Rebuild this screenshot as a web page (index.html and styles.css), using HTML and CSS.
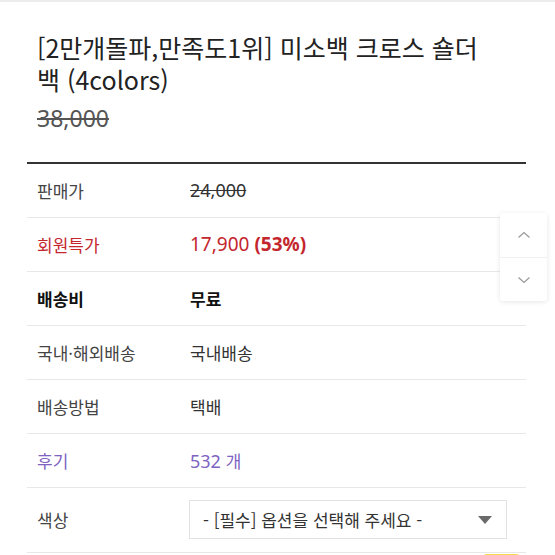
FILE: index.html
```html
<!DOCTYPE html>
<html lang="ko">
  <head>
    <meta charset="UTF-8" />
    <meta name="viewport" content="width=device-width, initial-scale=1.0" />
    <title>미소백 크로스 숄더 백</title>
    <link rel="stylesheet" href="styles.css">
  </head>
  <body>
    <main class="product">
      <h1 class="product--title">[2만개돌파,만족도1위] 미소백 크로스 숄더 백 (4colors)</h1>
      <p class="product--price">38,000</p>

      <table class="info">
        <tr>
          <td class="label">판매가</td>
          <td class="value num strike">24,000</td>
        </tr>
        <tr class="member">
          <td class="label">회원특가</td>
          <td class="value num">17,900 <span class="rate">(53%)</span></td>
        </tr>
        <tr class="strong">
          <td class="label">배송비</td>
          <td class="value">무료</td>
        </tr>
        <tr>
          <td class="label">국내·해외배송</td>
          <td class="value">국내배송</td>
        </tr>
        <tr>
          <td class="label">배송방법</td>
          <td class="value">택배</td>
        </tr>
        <tr class="review">
          <td class="label">후기</td>
          <td class="value"><span class="count">532</span> 개</td>
        </tr>
        <tr class="option">
          <td class="label">색상</td>
          <td class="value">
            <div class="select">
              <span>- [필수] 옵션을 선택해 주세요 -</span>
              <span class="select--arrow"></span>
            </div>
          </td>
        </tr>
      </table>

      <div class="more">
        <span class="more--badge"></span>
      </div>
    </main>

    <div class="scroll">
      <button class="scroll--button" aria-label="위로">
        <svg width="14" height="8" viewBox="0 0 14 8"><polyline points="1.5,6.5 7,1.5 12.5,6.5" fill="none" stroke="#999" stroke-width="1.2" /></svg>
      </button>
      <button class="scroll--button" aria-label="아래로">
        <svg width="14" height="8" viewBox="0 0 14 8"><polyline points="1.5,1.5 7,6.5 12.5,1.5" fill="none" stroke="#999" stroke-width="1.2" /></svg>
      </button>
    </div>
  </body>
</html>
```

FILE: styles.css
```css
* {
  box-sizing: border-box;
}

html,
body {
  margin: 0;
  background-color: #fff;
  font-family: "Noto Sans CJK KR", "Noto Sans", sans-serif;
  color: #222;
}

body {
  border-top: 2px solid #ececec;
  height: 555px;
  overflow: hidden;
}

.product {
  padding: 29px 29px 0 27px;
}

.product--title {
  max-width: 470px;
  margin: 0;
  padding-left: 10px;
  font-size: 25px;
  font-weight: 400;
  line-height: 32px;
  color: #222;
}

.product--price {
  margin: 8px 0 0;
  padding-left: 10px;
  font-family: "Noto Sans", sans-serif;
  font-size: 23px;
  line-height: 30px;
  color: #555;
  text-decoration: line-through;
}

.info {
  width: 100%;
  margin-top: 29px;
  border-collapse: collapse;
  border-top: 2px solid #333;
}

.info td {
  height: 54px;
  padding: 0;
  border-bottom: 1px solid #e8e8e8;
  font-size: 17px;
  vertical-align: middle;
}

.info .label {
  width: 151px;
  padding-left: 10px;
  color: #444;
}

.info .value {
  padding-left: 12px;
  color: #333;
}

.info .num,
.count {
  font-family: "Noto Sans", "Noto Sans CJK KR", sans-serif;
  font-size: 18px;
}

.strike {
  text-decoration: line-through;
}

.member .label,
.member .value {
  color: #c4262e;
}

.member .num {
  font-size: 19px;
}

.rate {
  font-size: 19px;
  font-weight: 700;
}

.strong .label,
.strong .value {
  font-weight: 700;
  color: #111;
}

.review .label,
.review .value {
  color: #7d62c2;
}

.option td {
  height: 65px;
}

.option .value {
  padding-left: 11px;
}

.select {
  display: flex;
  align-items: center;
  justify-content: space-between;
  width: 318px;
  height: 39px;
  padding: 0 14px 0 13px;
  border: 1px solid #e2e2e2;
  font-size: 17px;
  color: #333;
}

.select--arrow {
  width: 0;
  height: 0;
  border-left: 7px solid transparent;
  border-right: 7px solid transparent;
  border-top: 8px solid #6a6a6a;
}

.more {
  display: flex;
  justify-content: flex-end;
  padding-right: 6px;
  margin-top: 1px;
}

.more--badge {
  width: 37px;
  height: 20px;
  border-radius: 4px 4px 0 0;
  background-color: #f6d84a;
}

.scroll {
  position: fixed;
  top: 213px;
  right: 8px;
  width: 47px;
  display: flex;
  flex-direction: column;
  background-color: #fff;
  border-radius: 3px;
  box-shadow: 0 1px 5px rgba(0, 0, 0, 0.1);
}

.scroll--button {
  height: 44px;
  display: flex;
  align-items: center;
  justify-content: center;
  padding: 0;
  border: none;
  background: none;
}

.scroll--button + .scroll--button {
  border-top: 1px solid #f1f1f1;
}
```
